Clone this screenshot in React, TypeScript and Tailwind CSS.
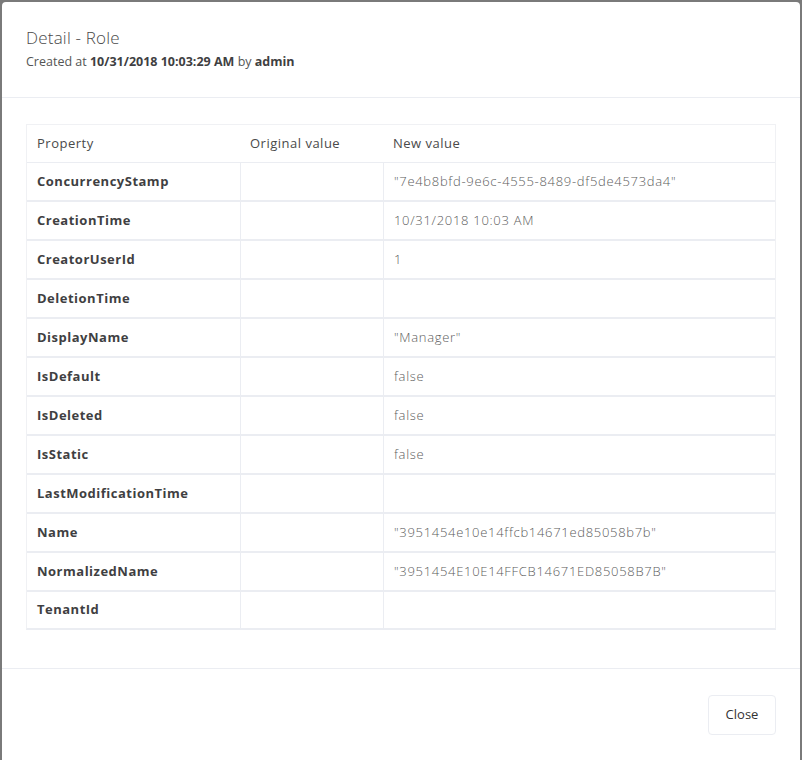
import React from "react";

const rows: [string, string, string][] = [
  ["ConcurrencyStamp", "", '"7e4b8bfd-9e6c-4555-8489-df5de4573da4"'],
  ["CreationTime", "", "10/31/2018 10:03 AM"],
  ["CreatorUserId", "", "1"],
  ["DeletionTime", "", ""],
  ["DisplayName", "", '"Manager"'],
  ["IsDefault", "", "false"],
  ["IsDeleted", "", "false"],
  ["IsStatic", "", "false"],
  ["LastModificationTime", "", ""],
  ["Name", "", '"3951454e10e14ffcb14671ed85058b7b"'],
  ["NormalizedName", "", '"3951454E10E14FFCB14671ED85058B7B"'],
  ["TenantId", "", ""],
];

export default function App() {
  return (
    <div
      className="w-[802px] h-[760px] overflow-hidden bg-[#7a7a7a] pt-[2px] px-[2px]"
      style={{ fontFamily: '"Open Sans", "Noto Sans", sans-serif' }}
    >
      <div className="bg-white rounded-t-[4px] h-[800px] text-[#555555]">
        <div className="h-[96px] border-b border-[#ebedf2] px-[24px] pt-[25px]">
          <div className="text-[17px] leading-[22px] font-light text-[#4a4a4a] tracking-[0.2px]">Detail - Role</div>
          <div className="text-[12.5px] leading-[20px] mt-[3px] text-[#555555]">
            Created at <span className="font-bold text-[#3f3f42]">10/31/2018 10:03:29 AM</span> by{" "}
            <span className="font-bold text-[#3f3f42]">admin</span>
          </div>
        </div>
        <div className="px-[24px] pt-[26px] h-[571px] border-b border-[#ebedf2]">
          <div className="w-[750px] border border-[#f0f1f4] border-b-2 border-b-[#ebedf2] text-[13px] tracking-[0.5px]">
            <div className="grid grid-cols-[214px_143px_1fr] h-[38px] border-b border-[#ebedf2] items-center text-[#4a4a4a]">
              <div className="pl-[10px]">Property</div>
              <div className="pl-[9px]">Original value</div>
              <div className="pl-[9px]">New value</div>
            </div>
            {rows.map((r, i) => (
              <div
                key={r[0]}
                className={
                  "grid grid-cols-[214px_143px_1fr] " +
                  (i < rows.length - 1 ? "h-[39px] border-b-2 border-[#ebedf2]" : "h-[36px]")
                }
              >
                <div className="pl-[10px] flex items-center font-bold text-[#3f3f42] border-r border-[#ebedf2]">
                  {r[0]}
                </div>
                <div className="pl-[9px] flex items-center border-r border-[#ebedf2]">{r[1]}</div>
                <div className="pl-[10px] flex items-center font-light text-[#5c5c5c] tracking-[0.7px]">{r[2]}</div>
              </div>
            ))}
          </div>
        </div>
        <div className="flex justify-end px-[24px] pt-[26px]">
          <button className="w-[68px] h-[40px] border border-[#ebedf2] rounded-[4px] text-[13px] text-[#333333] bg-white">
            Close
          </button>
        </div>
      </div>
    </div>
  );
}
